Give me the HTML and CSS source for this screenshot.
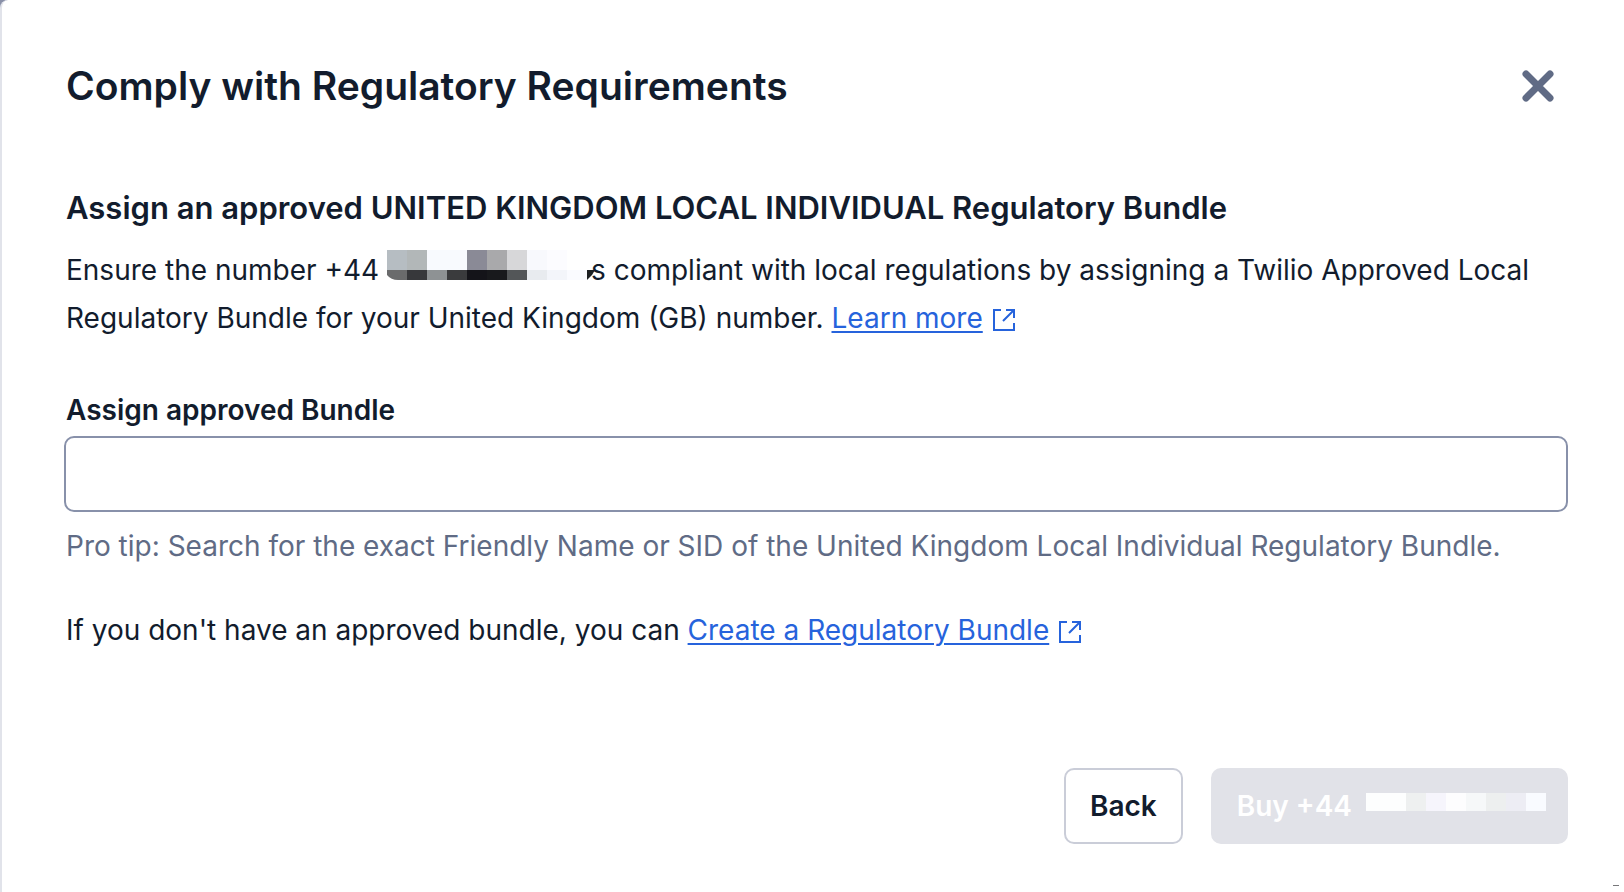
FILE: index.html
```html
<!DOCTYPE html>
<html lang="en">
<head>
<meta charset="utf-8">
<title>Comply with Regulatory Requirements</title>
<link rel="stylesheet" href="styles.css">
</head>
<body>
<main class="dialog" role="dialog" aria-labelledby="dialog-title">
  <header class="dialog-header">
    <h1 class="dialog-title" id="dialog-title">Comply with Regulatory Requirements</h1>
    <button class="close" type="button" aria-label="Close">
      <svg class="close-icon" viewBox="0 0 32 32" aria-hidden="true"><path d="M4 4L28 28M28 4L4 28"/></svg>
    </button>
  </header>
  <form class="dialog-form">
    <section class="intro">
      <h2 class="subtitle">Assign an approved UNITED KINGDOM LOCAL INDIVIDUAL Regulatory Bundle</h2>
      <p class="text">Ensure the number +44 <svg class="mask" viewBox="0 0 204 30" aria-hidden="true">
        <path fill="#b6bdc2" d="M0 0h20v20H0z"/><path fill="#b2b7b8" d="M20 0h20v20H20z"/><path fill="#f8fafe" d="M40 0h40v20H40z"/><path fill="#8a8a96" d="M80 0h20v20H80z"/><path fill="#a9a9ab" d="M100 0h20v20h-20z"/><path fill="#d7d7d9" d="M120 0h20v20h-20z"/><path fill="#f8f9fd" d="M140 0h20v20h-20z"/><path fill="#fcfcff" d="M160 0h20v20h-20z"/>
        <path fill="#6a6b6c" d="M0 20h20v10H11Q4 30 0 25z"/><path fill="#37383b" d="M20 20h20v10H20z"/><path fill="#8e9294" d="M40 20h20v10H40z"/><path fill="#3a3b3d" d="M60 20h20v10H60z"/><path fill="#141419" d="M80 20h20v10H80z"/><path fill="#18191c" d="M100 20h20v10h-20z"/><path fill="#535658" d="M120 20h20v10h-20z"/><path fill="#e8ebef" d="M140 20h20v10h-20z"/><path fill="#f3f5fa" d="M160 20h20v10h-20z"/><path fill="#fafbff" d="M180 20h20v10h-20z"/><path fill="#1b1f22" d="M200 20h8l-3 5-5 5z"/>
      </svg>s compliant with local regulations by assigning a Twilio Approved Local Regulatory Bundle for your United Kingdom (GB) number. <a class="link" href="#learn">Learn more</a><svg class="external" viewBox="0 0 24 24" aria-hidden="true"><path d="M9 2H2v20h20v-7M14 2h8v8M22 2L11 13"/></svg></p>
    </section>
    <div class="field">
      <label class="label" for="bundle">Assign approved Bundle</label>
      <input class="input" id="bundle" type="text" aria-describedby="bundle-tip">
      <p class="tip" id="bundle-tip">Pro tip: Search for the exact Friendly Name or SID of the United Kingdom Local Individual Regulatory Bundle.</p>
    </div>
    <p class="text">If you don't have an approved bundle, you can <a class="link" href="#create">Create a Regulatory Bundle</a><svg class="external" viewBox="0 0 24 24" aria-hidden="true"><path d="M9 2H2v20h20v-7M14 2h8v8M22 2L11 13"/></svg></p>
    <footer class="actions">
      <button class="button" type="button">Back</button>
      <button class="button button-primary" type="submit" disabled>Buy +44
        <svg class="button-mask" viewBox="0 0 180 18" aria-hidden="true"><path fill="#fdfefe" d="M0 0h40v18H0z"/><path fill="#eef0f0" d="M40 0h20v18H40z"/><path fill="#f6f5fc" d="M60 0h20v18H60z"/><path fill="#fdfdfe" d="M80 0h20v18H80z"/><path fill="#f6f8f9" d="M100 0h20v18h-20z"/><path fill="#edefef" d="M120 0h20v18h-20z"/><path fill="#ededf4" d="M140 0h20v18h-20z"/><path fill="#f9fbff" d="M160 0h20v18h-20z"/></svg>
      </button>
    </footer>
  </form>
  <span class="corner-mark"></span>
</main>
</body>
</html>
```
FILE: styles.css
```css
* {
  box-sizing: border-box;
}

body {
  margin: 0;
  background: #8990a8;
  color: #121c2d;
  font-family: Inter, "Liberation Sans", sans-serif;
  font-size: 28px;
  line-height: 48px;
}

.dialog {
  position: relative;
  min-height: 100vh;
  padding: 56px 56px 36px 64px;
  border-left: 2px solid #e1e3ea;
  border-top-left-radius: 8px;
  background: #fff;
}

.dialog-header {
  display: flex;
  align-items: center;
  justify-content: space-between;
  padding-right: 14px;
}

.dialog-title,
.subtitle,
.text,
.tip {
  margin: 0;
}

.dialog-title {
  font-size: 39px;
  line-height: 60px;
  font-weight: 600;
}

.subtitle {
  margin-bottom: 18px;
  font-size: 31px;
  line-height: 40px;
  font-weight: 600;
}

.close {
  display: flex;
  padding: 0;
  border: 0;
  background: none;
}

.close-icon {
  width: 32px;
  height: 32px;
  fill: none;
  stroke: #606b85;
  stroke-width: 7;
  stroke-linecap: round;
}

.dialog-form {
  padding-top: 72px;
}

.mask {
  width: 204px;
  height: 30px;
  overflow: visible;
}

.link {
  color: #2663dc;
  text-decoration: underline;
  text-decoration-thickness: 2px;
  text-underline-offset: 3px;
}

.external {
  width: 24px;
  height: 24px;
  margin-left: 9px;
  vertical-align: -4px;
  fill: none;
  stroke: #2663dc;
  stroke-width: 2;
}

.field {
  display: flex;
  flex-direction: column;
  padding: 48px 0 36px;
}

.label {
  line-height: 40px;
  padding-bottom: 6px;
  font-weight: 600;
}

.input {
  height: 76px;
  margin-left: -2px;
  padding: 0 20px;
  border: 2px solid #8891aa;
  border-radius: 10px;
  background: #fff;
  color: inherit;
  font: inherit;
}

.tip {
  padding-top: 10px;
  color: #606b85;
}

.actions {
  display: flex;
  justify-content: flex-end;
  gap: 28px;
  padding-top: 114px;
}

.button {
  display: flex;
  align-items: center;
  height: 76px;
  padding: 0 24px;
  border: 2px solid #cacdd8;
  border-radius: 10px;
  background: #fff;
  color: #121c2d;
  font: inherit;
  font-weight: 600;
}

.button-primary {
  gap: 14px;
  padding-right: 20px;
  border-color: #e1e2e8;
  background: #e1e2e8;
  color: #fff;
}

.button-mask {
  width: 180px;
  height: 18px;
  margin-bottom: 8px;
}

.corner-mark {
  position: absolute;
  right: 5px;
  bottom: 6px;
  width: 6px;
  height: 1px;
  background: #77777a;
}
```
